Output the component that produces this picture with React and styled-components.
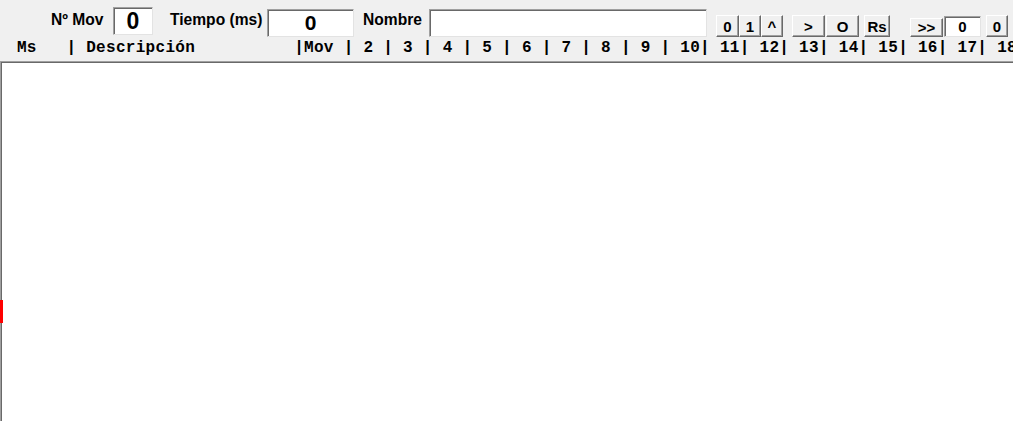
import React from "react";
import styled, { createGlobalStyle } from "styled-components";

const GlobalStyle = createGlobalStyle`
  html, body {
    margin: 0;
    padding: 0;
    background: #f0f0f0;
    overflow: hidden;
  }
`;

const Window = styled.div`
  width: 1013px;
  height: 421px;
  display: flex;
  flex-direction: column;
  background: #f0f0f0;
  overflow: hidden;
  font-family: "Liberation Sans", Arial, sans-serif;
`;

const Toolbar = styled.div`
  height: 38px;
  display: flex;
  align-items: flex-start;
  padding-left: 51px;
  flex-shrink: 0;
`;

const Label = styled.span`
  width: ${(p) => p.$w}px;
  margin-left: ${(p) => p.$ml || 0}px;
  margin-top: 11px;
  font-size: 15.6px;
  line-height: 18px;
  font-weight: bold;
  color: #000;
  white-space: nowrap;
  flex-shrink: 0;
`;

const Field = styled.div`
  width: ${(p) => p.$w}px;
  height: ${(p) => p.$h}px;
  margin-left: ${(p) => p.$ml || 0}px;
  margin-top: ${(p) => p.$top}px;
  box-sizing: border-box;
  background: #fff;
  border: 1px solid;
  border-color: #a0a0a0 #e3e3e3 #e3e3e3 #a0a0a0;
  box-shadow: inset 1px 1px 0 #696969;
  display: flex;
  align-items: center;
  justify-content: center;
  font-size: ${(p) => p.$fs || 14}px;
  font-weight: bold;
  color: #000;
  flex-shrink: 0;
`;

const Button = styled.button`
  width: ${(p) => p.$w}px;
  height: ${(p) => p.$h || 22}px;
  margin: ${(p) => p.$top || 15}px 0 0 ${(p) => p.$ml || 0}px;
  padding: 0;
  box-sizing: border-box;
  background: #f0f0f0;
  border: 1px solid;
  border-color: #fff #696969 #696969 #fff;
  box-shadow: inset -1px -1px 0 #a0a0a0;
  font-family: "Liberation Sans", Arial, sans-serif;
  font-size: 15px;
  font-weight: bold;
  color: #000;
  line-height: 1;
  flex-shrink: 0;
  cursor: pointer;
`;

const HeaderRow = styled.div`
  height: 23px;
  line-height: 20px;
  padding-left: 7px;
  font-family: "Liberation Mono", "Courier New", monospace;
  font-size: 16px;
  letter-spacing: 0.3px;
  font-weight: bold;
  white-space: pre;
  color: #000;
  flex-shrink: 0;
`;

const ListArea = styled.div`
  position: relative;
  flex: 1;
  background: #fff;
  border-top: 1px solid #a0a0a0;
  border-left: 1px solid #a0a0a0;
  box-shadow: inset 1px 1px 0 #696969;
`;

const Marker = styled.div`
  position: absolute;
  left: -1px;
  top: 238px;
  width: 3px;
  height: 23px;
  background: #ff0000;
`;

const header =
  " Ms   | Descripción          |Mov | 2 | 3 | 4 | 5 | 6 | 7 | 8 | 9 | 10| 11| 12| 13| 14| 15| 16| 17| 18|";

export default function App() {
  return (
    <>
      <GlobalStyle />
      <Window>
        <Toolbar>
          <Label $w={62}>Nº Mov</Label>
          <Field $w={40} $h={28} $top={7} $fs={23}>
            0
          </Field>
          <Label $w={97} $ml={17}>
            Tiempo (ms)
          </Label>
          <Field $w={87} $h={28} $top={9} $fs={21}>
            0
          </Field>
          <Label $w={66} $ml={9}>
            Nombre
          </Label>
          <Field $w={278} $h={28} $top={9} />
          <Button $w={23} $ml={9}>0</Button>
          <Button $w={22}>1</Button>
          <Button $w={22}>^</Button>
          <Button $w={33} $ml={9}>&gt;</Button>
          <Button $w={33} $ml={1}>O</Button>
          <Button $w={26} $ml={5}>Rs</Button>
          <Button $w={33} $ml={20} $top={18} $h={19}>
            &gt;&gt;
          </Button>
          <Field $w={37} $h={21} $top={16} $ml={1} $fs={15}>
            0
          </Field>
          <Button $w={22} $ml={5}>0</Button>
        </Toolbar>
        <HeaderRow>{header}</HeaderRow>
        <ListArea>
          <Marker />
        </ListArea>
      </Window>
    </>
  );
}
